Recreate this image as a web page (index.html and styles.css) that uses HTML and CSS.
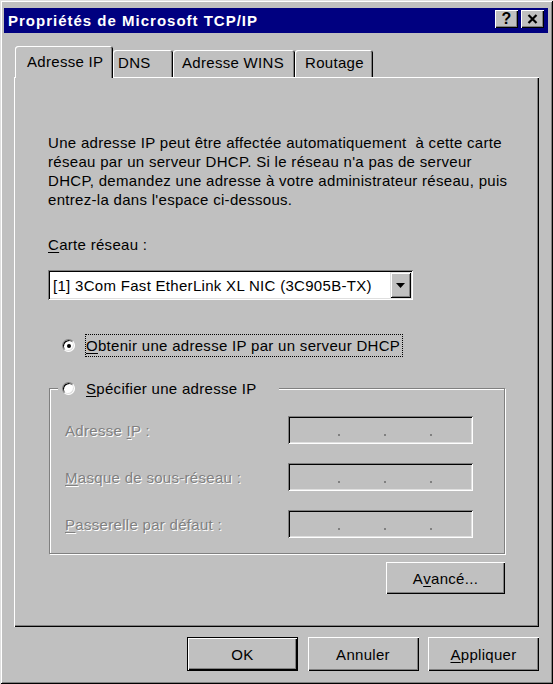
FILE: index.html
```html
<!DOCTYPE html>
<html lang="fr">
<head>
<meta charset="utf-8">
<title>Propriétés de Microsoft TCP/IP</title>
<link rel="stylesheet" href="styles.css">
</head>
<body>
<div class="window">
  <div class="titlebar">
    <span class="title">Propriétés de Microsoft TCP/IP</span>
    <div class="tbtns">
      <span class="tbtn help">?</span>
      <span class="tbtn close"><svg width="11" height="10" viewBox="0 0 11 10"><path d="M1.5 1 L9.5 9 M9.5 1 L1.5 9" stroke="#000" stroke-width="2.2" fill="none"/></svg></span>
    </div>
  </div>
  <div class="tabs">
    <div class="tab active t-ip">Adresse IP</div>
    <div class="tab t-dns">DNS</div>
    <div class="tab t-wins">Adresse WINS</div>
    <div class="tab t-route">Routage</div>
  </div>
  <div class="panel">
    <p class="intro">Une adresse IP peut être affectée automatiquement &nbsp;à cette carte<br>réseau par un serveur DHCP. Si le réseau n'a pas de serveur<br>DHCP, demandez une adresse à votre administrateur réseau, puis<br>entrez-la dans l'espace ci-dessous.</p>
    <div class="lbl"><u>C</u>arte réseau :</div>
    <div class="combo">
      <span class="combo-text">[1] 3Com Fast EtherLink XL NIC (3C905B-TX)</span>
      <span class="combo-btn"><svg width="9" height="5" viewBox="0 0 9 5"><polygon points="0,0 9,0 4.5,5" fill="#000"/></svg></span>
    </div>
    <div class="radio-row">
      <span class="radio on"></span>
      <span class="radio-label focus"><u>O</u>btenir une adresse IP par un serveur DHCP</span>
    </div>
    <fieldset class="group">
      <legend class="group-legend"><span class="radio"></span><span class="radio-label"><u>S</u>pécifier une adresse IP</span></legend>
      <div class="fields">
        <span class="dis">Adresse <u>I</u>P :</span>
        <div class="ipf"><i></i><i></i><i></i></div>
        <span class="dis"><u>M</u>asque de sous-réseau :</span>
        <div class="ipf"><i></i><i></i><i></i></div>
        <span class="dis"><u>P</u>asserelle par défaut :</span>
        <div class="ipf"><i></i><i></i><i></i></div>
      </div>
    </fieldset>
    <div class="adv-row"><div class="btn adv">A<u>v</u>ancé...</div></div>
  </div>
  <div class="buttons">
    <div class="btn default">OK</div>
    <div class="btn">Annuler</div>
    <div class="btn"><u>A</u>ppliquer</div>
  </div>
</div>
</body>
</html>
```
FILE: styles.css
```css
* { box-sizing: border-box; }
html, body { margin: 0; padding: 0; }
body {
  width: 553px;
  height: 684px;
  overflow: hidden;
  background: #c0c0c0;
  font-family: "Liberation Sans", Arial, sans-serif;
  font-size: 15px;
  letter-spacing: 0.3px;
  color: #000;
}
u { text-decoration: underline; text-underline-offset: 2px; }

.window {
  width: 553px;
  height: 684px;
  background: #c0c0c0;
  padding: 8px 5px 0 4px;
  box-shadow: inset 1px 1px #dfdfdf, inset -1px -1px #000, inset 2px 2px #fff, inset -2px -2px #808080;
}

/* title bar */
.titlebar {
  height: 25px;
  background: #000080;
  display: flex;
  justify-content: space-between;
  align-items: flex-start;
  padding: 2px 4px 0 4px;
}
.title {
  color: #fff;
  font-weight: bold;
  font-size: 15px;
  letter-spacing: 1px;
  line-height: 21px;
}
.tbtns { display: flex; gap: 3px; }
.tbtn {
  width: 23px;
  height: 18px;
  background: #c0c0c0;
  display: flex;
  align-items: center;
  justify-content: center;
  font-weight: bold;
  font-size: 16px;
  line-height: 18px;
  box-shadow: inset 1px 1px #fff, inset -1px -1px #000, inset -2px -2px #808080;
}

/* tabs */
.tabs {
  height: 44px;
  display: flex;
  align-items: flex-end;
  padding-left: 11px;
}
.tab {
  height: 27px;
  padding-top: 3px;
  line-height: 19px;
  white-space: nowrap;
  border-radius: 3px 3px 0 0;
  background: #c0c0c0;
  box-shadow: inset 1px 1px #fff, inset -1px 0 #000, inset -2px 0 #808080;
}
.tab.active {
  position: relative;
  z-index: 2;
  height: 32px;
  margin-bottom: -1px;
  padding-top: 6px;
}
.t-ip { width: 98px; padding-left: 12px; }
.t-dns { width: 60px; padding-left: 5px; }
.t-wins { width: 122px; padding-left: 9px; }
.t-route { width: 78px; padding-left: 10px; }

/* panel */
.panel {
  height: 550px;
  margin: 0 9px 0 10px;
  padding: 56px 34px 0 34px;
  box-shadow: inset 1px 1px #fff, inset -1px -1px #000, inset -2px -2px #808080;
}
.intro {
  margin: 0;
  line-height: 19px;
  white-space: nowrap;
}
.lbl {
  margin-top: 26px;
  line-height: 19px;
}

.combo {
  margin-top: 16px;
  width: 365px;
  height: 30px;
  padding: 2px;
  background: #fff;
  display: flex;
  align-items: center;
  box-shadow: inset 1px 1px #808080, inset -1px -1px #fff, inset 2px 2px #000, inset -2px -2px #dfdfdf;
}
.combo-text {
  flex: 1;
  padding-left: 3px;
  white-space: nowrap;
}
.combo-btn {
  width: 21px;
  height: 26px;
  background: #c0c0c0;
  display: flex;
  align-items: center;
  justify-content: center;
  box-shadow: inset 1px 1px #dfdfdf, inset -1px -1px #000, inset 2px 2px #fff, inset -2px -2px #808080;
}

/* radios */
.radio-row {
  margin-top: 34px;
  height: 23px;
  display: flex;
  align-items: center;
  padding-left: 14px;
}
.radio {
  flex: none;
  width: 13px;
  height: 13px;
  border-radius: 50%;
  background: #fff;
  border: 1px solid;
  border-color: #808080 #fff #fff #808080;
  box-shadow: inset 1px 1px #000, inset -1px -1px #dfdfdf;
  display: flex;
  align-items: center;
  justify-content: center;
}
.radio.on::after {
  content: "";
  width: 4px;
  height: 4px;
  border-radius: 50%;
  background: #000;
}
.radio-label {
  margin-left: 10px;
  line-height: 21px;
  white-space: nowrap;
}
.radio-label.focus {
  border: 1px dotted #000;
  padding: 0 2px 0 0;
}

/* group box */
.group {
  margin: 21px 0 0 1px;
  width: 456px;
  min-width: 0;
  padding: 17px 31px 15px 15px;
  border: 1px solid #808080;
  box-shadow: inset 1px 1px #fff, 1px 1px #fff;
}
.group-legend {
  display: flex;
  align-items: center;
  margin-left: -7px;
  padding: 0 22px 0 4px;
  line-height: 20px;
  background: #c0c0c0;
}
.group-legend .radio-label { margin-left: 11px; }

.fields {
  display: grid;
  grid-template-columns: 1fr 185px;
  row-gap: 19px;
  align-items: center;
}
.dis {
  color: #808080;
  text-shadow: 1px 1px 0 #fff;
  white-space: nowrap;
}
.ipf {
  height: 28px;
  display: flex;
  align-items: flex-start;
  padding: 18px 0 0 50px;
  gap: 44px;
  box-shadow: inset 1px 1px #808080, inset -1px -1px #fff, inset 2px 2px #000, inset -2px -2px #dfdfdf;
}
.ipf i {
  width: 2px;
  height: 2px;
  background: #808080;
}

/* buttons */
.btn {
  display: flex;
  align-items: center;
  justify-content: center;
  width: 111px;
  height: 34px;
  background: #c0c0c0;
  white-space: nowrap;
  box-shadow: inset 1px 1px #fff, inset -1px -1px #000, inset -2px -2px #808080;
}
.btn.default {
  box-shadow: inset 0 0 0 1px #000, inset 2px 2px #fff, inset -2px -2px #000, inset -3px -3px #808080;
}
.adv-row {
  margin-top: 8px;
  display: flex;
  justify-content: flex-end;
}
.btn.adv { width: 119px; height: 32px; }

.buttons {
  margin-top: 10px;
  padding-right: 9px;
  display: flex;
  justify-content: flex-end;
  gap: 9.5px;
}
```
